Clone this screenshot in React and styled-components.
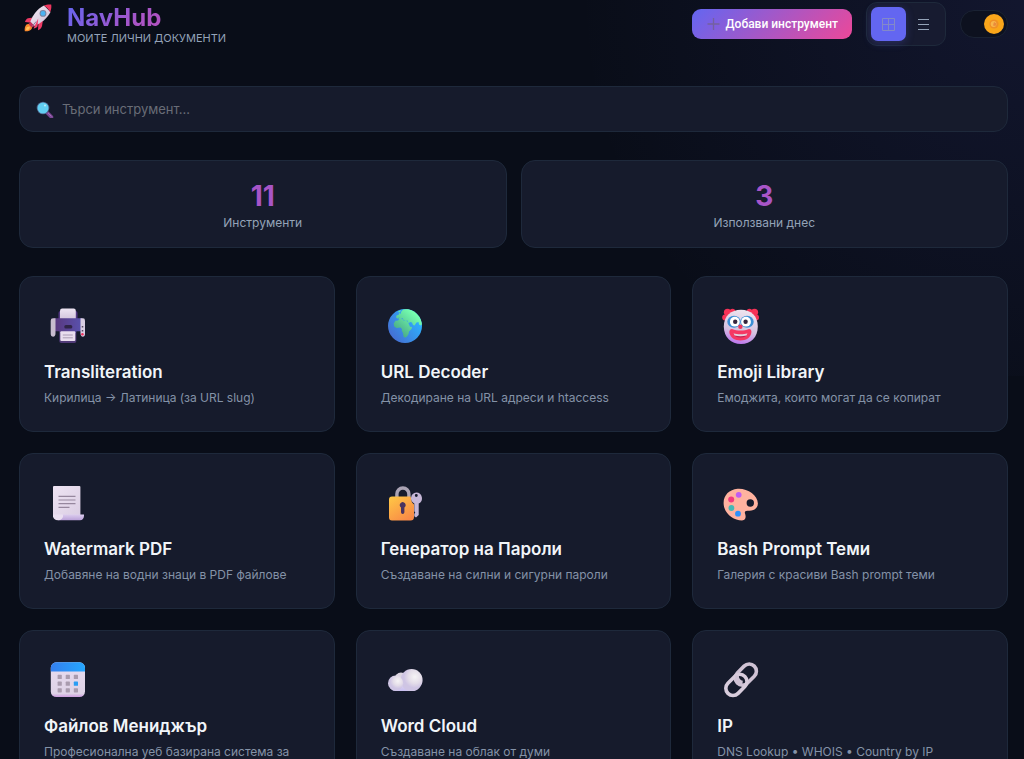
import React, { useState } from 'react';
import styled, { createGlobalStyle } from 'styled-components';

const sans = "Inter, 'Noto Sans', sans-serif";

const GlobalStyle = createGlobalStyle`
  *, *::before, *::after { box-sizing: border-box; }
  body {
    margin: 0;
    min-height: 100vh;
    color: #f1f5f9;
    font-family: ${sans};
    background:
      radial-gradient(circle 446px at 100% 0, rgba(99, 102, 241, 0.1), transparent) top right / 50% 376px no-repeat,
      #090d18;
  }
`;

const Page = styled.div`
  padding: 0 16px 24px 19px;
`;

const Header = styled.header`
  display: flex;
  justify-content: space-between;
  align-items: center;
  height: 48px;
  margin-bottom: 38px;
`;

const Logo = styled.div`
  display: flex;
  align-self: flex-start;
  gap: 10px;
`;

const LogoMark = styled.span`
  display: flex;
  align-items: center;
  justify-content: center;
  width: 38px;
  height: 36px;
`;

const LogoText = styled.div`
  padding-top: 4px;
`;

const Brand = styled.h1`
  margin: 0;
  width: max-content;
  font-size: 24px;
  line-height: 28px;
  font-weight: 700;
  color: transparent;
  background: linear-gradient(135deg, #6366f1, #a855c7 70%, #b54fbd);
  background-clip: text;
`;

const Tagline = styled.p`
  margin: 0;
  font-size: 11px;
  line-height: 12px;
  text-transform: uppercase;
  color: #94a3b8;
`;

const Actions = styled.div`
  display: flex;
  align-items: center;
  gap: 14px;
`;

const AddButton = styled.button`
  display: flex;
  align-items: center;
  gap: 6px;
  height: 30px;
  padding: 0 14px 0 15px;
  border: 0;
  border-radius: 9px;
  font: 500 12px/20px Roboto, 'Liberation Sans', sans-serif;
  color: #fff;
  background: linear-gradient(135deg, #6366f1, #ec4899);
`;

const ViewToggle = styled.div`
  display: flex;
  padding: 4px;
  border: 1px solid #1e293b;
  border-radius: 11px;
  background: #171b30;
`;

const ViewButton = styled.button`
  display: flex;
  align-items: center;
  justify-content: center;
  width: 35px;
  height: 34px;
  padding: 0;
  border: 0;
  border-radius: 7px;
  color: ${(p) => (p.$active ? '#8389c8' : '#94a3b8')};
  background: ${(p) => (p.$active ? '#6366f1' : 'transparent')};
  box-shadow: ${(p) => (p.$active ? '0 2px 8px rgba(99, 102, 241, 0.25)' : 'none')};
`;

const ThemeSwitch = styled.label`
  position: relative;
  display: flex;
  align-items: center;
  justify-content: ${(p) => (p.$on ? 'flex-end' : 'flex-start')};
  width: 48px;
  height: 28px;
  padding: 0 3px;
  border: 1px solid #1a2233;
  border-radius: 14px;
  background: #0d111f;
`;

const SwitchInput = styled.input`
  position: absolute;
  inset: 0;
  width: 100%;
  height: 100%;
  margin: 0;
  opacity: 0;
`;

const SearchBox = styled.label`
  display: flex;
  align-items: center;
  gap: 8px;
  height: 46px;
  margin-bottom: 28px;
  padding: 0 16px;
  border: 1px solid #1e293b;
  border-radius: 14px;
  background: #161b2c;
`;

const SearchInput = styled.input`
  flex: 1;
  min-width: 0;
  padding: 0;
  border: 0;
  outline: 0;
  font: 400 13px/20px ${sans};
  color: #f1f5f9;
  background: transparent;
  &::placeholder { color: #696d77; opacity: 1; }
`;

const Stats = styled.section`
  display: grid;
  grid-template-columns: 1fr 1fr;
  gap: 14px;
  margin-bottom: 28px;
`;

const StatCard = styled.div`
  padding: 18px 20px 14px;
  border: 1px solid #1e293b;
  border-radius: 14px;
  text-align: center;
  background: #161b2c;
`;

const StatValue = styled.div`
  font-size: 28px;
  line-height: 34px;
  font-weight: 700;
  color: #a855c7;
`;

const StatLabel = styled.div`
  font-size: 12px;
  line-height: 20px;
  color: #94a3b8;
`;

const ToolGrid = styled.main`
  display: grid;
  grid-template-columns: repeat(3, 1fr);
  gap: 21px;
`;

const ToolCard = styled.article`
  padding: 24px;
  border: 1px solid #1e293b;
  border-radius: 14px;
  background: #161b2c;
`;

const ToolIcon = styled.div`
  display: flex;
  align-items: center;
  justify-content: center;
  width: 48px;
  height: 50px;
  margin-bottom: 10px;
  svg { overflow: visible; }
`;

const ToolTitle = styled.h2`
  margin: 0 0 5px;
  font-size: 17px;
  line-height: 22px;
  font-weight: 600;
`;

const ToolText = styled.p`
  margin: 0;
  font-size: 12px;
  line-height: 19px;
  color: #8492a7;
`;

const Emoji = ({ size = 36, box = 36, children }) => (
  <svg width={size} height={size} viewBox={`0 0 ${box} ${box}`} aria-hidden="true">{children}</svg>
);

const Rocket = () => (
  <Emoji size={28} box={28}>
    <defs>
      <linearGradient id="rk" x1="0" y1="0" x2="1" y2="1">
        <stop offset="0" stopColor="#f7eef8" /><stop offset="1" stopColor="#c9b9d2" />
      </linearGradient>
    </defs>
    <path d="M2.5 20.5C.7 22.2.4 25 .8 27.3c2.500.3 5.400-.3 6.800-2.200l1-3-3-2.500z" fill="#f98a2c" />
    <path d="M3 23c-1 1-1 2.500-.8 3.200 1.300 0 2.500-.4 3.200-1.400l.5-2.300z" fill="#ffc35a" />
    <path d="M9.500 13.500 4 14.200c-1.600.6-2.600 2-3 3.800l6.500.8z" fill="#ee3a65" />
    <path d="M14.500 18.500l-.5 7.700c2.300-.9 3.600-2.400 4-4.200l1-6z" fill="#ee3a65" />
    <path d="M20 1.600C13.800 4.500 9 10.500 6.200 18l4 4C17.500 19 23.600 14 26.500 8z" fill="url(#rk)" />
    <path d="M19.700 1.700C22.300.5 25.300.2 27.200.6c.4 2 .2 5-1.100 7.600-1.500-3.100-3.500-5.300-6.400-6.500z" fill="#ed365f" />
    <path d="M6.300 17.500 4.800 20.400l3 3 2.800-1.500z" fill="#c42f5b" />
    <path d="M14.200 14.500 9.500 24.500c2-.2 3-.8 4-2z" fill="#f0426c" />
    <path d="M8.200 22.300l4-4.800" stroke="#8f7c9d" strokeWidth="1" />
    <circle cx="19" cy="9.400" r="3.400" fill="#78829f" />
    <circle cx="19" cy="9.400" r="2.400" fill="#4ab2f2" />
  </Emoji>
);

const Magnifier = () => (
  <Emoji size={18} box={18}>
    <path d="M11.500 13l4 4" stroke="#7c4896" strokeWidth="3.600" strokeLinecap="round" />
    <path d="M12.200 13.200l3 3" stroke="#a36bb5" strokeWidth="1" strokeLinecap="round" />
    <circle cx="7" cy="8" r="6.300" fill="#4d6087" />
    <circle cx="7" cy="8" r="5.500" fill="#62cff2" />
    <circle cx="9" cy="5.500" r="1.100" fill="#b5edfb" />
  </Emoji>
);

const Coin = () => (
  <Emoji size={20} box={20}>
    <circle cx="10" cy="10" r="10" fill="#faa61a" />
    <circle cx="10" cy="10" r="4.600" fill="#f08f26" />
    <circle cx="9.600" cy="10" r="2.900" fill="#f8b64b" />
    <path d="M10 8l2.500 1.500-1 2.500-2.500-.5z" fill="#e98b3d" />
  </Emoji>
);

const Printer = () => (
  <Emoji>
    <defs>
      <linearGradient id="pr"><stop offset="0" stopColor="#59377d" /><stop offset="1" stopColor="#5952ae" /></linearGradient>
      <linearGradient id="pp" x1="0" y1="0" x2="0" y2="1"><stop offset="0" stopColor="#eee5f3" /><stop offset="1" stopColor="#cfc1da" /></linearGradient>
    </defs>
    <path d="M8.500 11V5q0-2 2-2h15q2 0 2 2v6z" fill="#513681" />
    <rect x="9.300" y="22" width="17" height="13" rx="2" fill="#513b78" />
    <rect x="10" y=".5" width="15.800" height="12" rx="2.200" fill="url(#pp)" />
    <path d="M4 10.300h28v13H27q-1 0-1 1v1H10v-1q0-1-1-1H4z" fill="url(#pr)" />
    <path d="M3 10.300h2.500v15q0 3.400-2.500 3.400-2.300 0-2.300-2.400V12.700q0-2.400 2.300-2.400z" fill="#c8bccf" />
    <path d="M30.500 10.300H33q2 0 2 2.400v13.600q0 2.400-2 2.400-2.500 0-2.500-3.400z" fill="#d8cde2" />
    <rect x="14.300" y="17" width="8" height="3.600" rx="1.600" fill="#302548" />
    <rect x="10.300" y="23.300" width="15" height="9.600" rx="1" fill="#e9ddee" />
    <path d="M12.800 27h10M12.800 29.800h10" stroke="#9b8ca6" strokeWidth=".8" />
    <path d="M32.500 18v1.500M32.500 22v1.500" stroke="#544962" strokeWidth="1.500" />
    <circle cx="32.400" cy="26.300" r="1.300" fill="#f0345f" />
  </Emoji>
);

const Globe = () => (
  <Emoji>
    <defs>
      <linearGradient id="sea" x1=".9" y1=".3" x2=".1" y2=".9"><stop offset="0" stopColor="#2cb2ff" /><stop offset="1" stopColor="#466bd0" /></linearGradient>
      <linearGradient id="land" gradientUnits="userSpaceOnUse" x1="28" y1="6" x2="10" y2="26"><stop offset="0" stopColor="#76ffb0" /><stop offset="1" stopColor="#46a684" /></linearGradient>
      <clipPath id="gl"><circle cx="18" cy="18" r="17" /></clipPath>
    </defs>
    <circle cx="18" cy="18" r="17" fill="url(#sea)" />
    <g clipPath="url(#gl)" fill="url(#land)">
      <path d="M14 4l2-2.500L20 1h5l6 4 3 5 1.500 6-2 1.500-1.500-1-.5-2.500-2 .5-2 3-1.500-.5-1-2.500-2-.5-1.500 1.500-1-3-2 .5-2-1-1-2-1.500 1-.5 1-2-.5.5-2 2-1z" />
      <path d="M8.500 12.800l2.500-.3 1.500-1.200 3-.3 1 1.500 2.500.3 1.500.7 1.500 3 1 2.300 2 .2-.5 2-2.500 2.500-.5 2.500-1.500 2.500-2 1.200-1.500-1.200-.5-3.500-1.200-2 .2-2-1.500-1.500-4 .5-2.300-1.500-.5-3z" />
      <path d="M9 9.500l.5-2L12 6.500l.5-2L14 6l1.500 1.500L14 9l-2 .3-1 1.400z" />
      <path d="M11 3.500l3-1.300-.8 1.500-1.500.8z" />
    </g>
  </Emoji>
);

const Clown = () => (
  <Emoji>
    <defs>
      <linearGradient id="cf" x1=".6" y1="0" x2=".4" y2="1"><stop offset="0" stopColor="#eee5ef" /><stop offset=".6" stopColor="#d5c3e0" /><stop offset="1" stopColor="#bd75ed" /></linearGradient>
    </defs>
    <g fill="#f63257">
      <circle cx="4.500" cy="4.300" r="3.600" /><circle cx="9.500" cy="3.500" r="2.800" /><circle cx="2.200" cy="9.500" r="3" />
      <circle cx="31.500" cy="4.300" r="3.600" /><circle cx="26.500" cy="3.500" r="2.800" /><circle cx="33" cy="9.500" r="3" />
    </g>
    <path d="M18 1.800C28 1.800 34.800 8 34.800 18.500S28 36 18 36 .8 29 .8 18.500 8 1.800 18 1.800z" fill="url(#cf)" />
    <ellipse cx="11" cy="13.700" rx="6.700" ry="6" fill="#3c8fd5" />
    <ellipse cx="24" cy="13.700" rx="6.700" ry="6" fill="#3c8fd5" />
    <circle cx="11.800" cy="13.700" r="4.900" fill="#fff" /><circle cx="23" cy="13.700" r="4.900" fill="#fff" />
    <circle cx="12.200" cy="13.700" r="2.200" fill="#35263f" /><circle cx="22.600" cy="13.700" r="2.200" fill="#35263f" />
    <path d="M9 21c3 1.300 5 1.600 8.500 1.600S23 22.300 26 21c2 0 3 2 2.200 4.500C27 30 23 32.400 17.500 32.400S8 30 6.500 25.500C5.800 23 7 21 9 21z" fill="#f63763" />
    <path d="M10.500 25.500c4 1.500 10 1.500 14 0-.5 2.500-3 4-7 4s-6.500-1.500-7-4z" fill="#bc2455" />
    <path d="M10.500 25.200c4 1.500 10 1.500 14 0l-1 2.200c-4 1.100-8 1.100-12 0z" fill="#e6cfdc" />
    <circle cx="17.400" cy="18.800" r="2.200" fill="#ef365d" />
  </Emoji>
);

const Scroll = () => (
  <Emoji>
    <defs>
      <linearGradient id="sc" x1="0" y1="0" x2="1" y2="1"><stop offset="0" stopColor="#eee4f3" /><stop offset="1" stopColor="#dacde3" /></linearGradient>
      <linearGradient id="sr" x1="0" y1="0" x2="0" y2="1"><stop offset="0" stopColor="#dccdee" /><stop offset="1" stopColor="#b9a0d8" /></linearGradient>
    </defs>
    <path d="M4 1h25.500q.9 0 .9.900V32H3V2q0-1 1-1z" fill="url(#sc)" />
    <path d="M12 29.500h22v1.300c0 2.700-1.500 4.500-4 4.500H8c2.500-1 3.500-3 4-5.800z" fill="url(#sr)" />
    <path d="M3 29.500h10v1.800c0 2.300-2 4-5 4s-5-1.700-5-4.500z" fill="#eadff1" />
    <path d="M8.500 11.300h17M8.500 15h17M8.500 18.700h17M8.500 22.400h11" stroke="#96879e" strokeWidth="1.200" />
  </Emoji>
);

const Lock = () => (
  <Emoji>
    <defs>
      <linearGradient id="lk" x1="0" y1="0" x2=".7" y2="1"><stop offset="0" stopColor="#ffc945" /><stop offset="1" stopColor="#f98a47" /></linearGradient>
    </defs>
    <path d="M9.900 14V9a6 6 0 0 1 12 0v5" fill="none" stroke="#aaa3b4" strokeWidth="3.400" />
    <path d="M5 11.500h18.500l1.500 6 2 2v12.500q0 3.500-3.500 3.500H5q-3 0-3-3v-18q0-3 3-3z" fill="url(#lk)" />
    <path d="M12.700 20.300a3 3 0 1 1 4.700 2.300v4.600a1.600 1.600 0 0 1-3.400 0v-4.600a3 3 0 0 1-1.300-2.300z" fill="#493360" />
    <path fillRule="evenodd" d="M29.300 7.500a5.800 5.800 0 0 1 2.400 11V30L29 32.600l-1.700-1.300v-2.500l1-1-1-1.500v-7.800a5.800 5.800 0 0 1 2-11zM29.300 9a1.400 1.400 0 1 0 0 2.900 1.400 1.400 0 0 0 0-2.900z" fill="#c6b7d7" />
  </Emoji>
);

const Palette = () => (
  <Emoji>
    <path fillRule="evenodd" d="M14.500 3.800C24 3 34.700 10 34.900 18.500c0 4.800-4 7.200-8.400 7.200-3.500 0-5.300.3-4.500 2.700 1 2.600 1.300 7-3 7.100C10 35.500.6 28 .6 18 .6 10 6.500 4.500 14.500 3.800zM27.300 14.300a3.700 3.700 0 1 0 0 7.400 3.700 3.700 0 0 0 0-7.400z" fill="#ffb29f" />
    <circle cx="15.700" cy="9.800" r="2.900" fill="#c15cf2" />
    <circle cx="8.200" cy="14.500" r="3" fill="#f43a7d" />
    <circle cx="8.400" cy="23" r="2.900" fill="#43b8b5" />
    <circle cx="15" cy="28.700" r="2.900" fill="#2e91fb" />
  </Emoji>
);

const Calendar = () => (
  <Emoji>
    <defs>
      <linearGradient id="ch"><stop offset="0" stopColor="#347fed" /><stop offset="1" stopColor="#25a7ff" /></linearGradient>
      <linearGradient id="cb" x1="0" y1="0" x2="0" y2="1"><stop offset="0" stopColor="#e8dcf0" /><stop offset=".9" stopColor="#ded2e6" /><stop offset="1" stopColor="#cd9cdf" /></linearGradient>
    </defs>
    <rect x=".8" y=".3" width="34.200" height="34.700" rx="5.500" fill="url(#cb)" />
    <path d="M.8 9.500V6A5.500 5.500 0 0 1 6.300.3h23.200A5.500 5.500 0 0 1 35 6v3.500z" fill="url(#ch)" />
    {[12.8, 19.6, 26.2].map((y, row) => [7.6, 15.7, 23.8].map((x, col) => (
      <rect key={`${x}-${y}`} x={x} y={y} width="4.200" height="4.200" rx=".6" fill={row === 1 && col === 2 ? '#2a9df4' : '#a99bae'} />
    )))}
  </Emoji>
);

const Cloud = () => (
  <Emoji>
    <defs>
      <linearGradient id="c0" x1="0" y1="0" x2="0" y2="1"><stop offset="0" stopColor="#e8e2ee" /><stop offset="1" stopColor="#c9bff0" /></linearGradient>
      <radialGradient id="c1" cx=".65" cy=".35"><stop offset="0" stopColor="#f6f4f6" /><stop offset=".6" stopColor="#e4dde9" /><stop offset="1" stopColor="#cfc5e4" /></radialGradient>
    </defs>
    <circle cx="14" cy="17" r="6.500" fill="#ddd6e2" />
    <rect x="3" y="18" width="28" height="11" rx="5.500" fill="url(#c0)" />
    <circle cx="24.600" cy="18.100" r="11" fill="url(#c1)" />
    <circle cx="8.600" cy="21.200" r="7.600" fill="url(#c1)" />
  </Emoji>
);

const Link = () => (
  <Emoji>
    <g fill="none" strokeWidth="3.600">
      <rect x="-12" y="-7.200" width="24" height="14.400" rx="7.200" transform="translate(22.800 12.600) rotate(-45)" stroke="#cfc2d4" />
      <rect x="-12" y="-7.200" width="24" height="14.400" rx="7.200" transform="translate(13.400 22.900) rotate(-45)" stroke="#d8ccdc" />
      <path d="M19.600 20.600a6.400 6.400 0 0 1-5.500-7" stroke="#cfc2d4" />
    </g>
  </Emoji>
);

const tools = [
  { icon: Printer, title: 'Transliteration', text: 'Кирилица → Латиница (за URL slug)' },
  { icon: Globe, title: 'URL Decoder', text: 'Декодиране на URL адреси и htaccess' },
  { icon: Clown, title: 'Emoji Library', text: 'Емоджита, които могат да се копират' },
  { icon: Scroll, title: 'Watermark PDF', text: 'Добавяне на водни знаци в PDF файлове' },
  { icon: Lock, title: 'Генератор на Пароли', text: 'Създаване на силни и сигурни пароли' },
  { icon: Palette, title: 'Bash Prompt Теми', text: 'Галерия с красиви Bash prompt теми' },
  { icon: Calendar, title: 'Файлов Мениджър', text: 'Професионална уеб базирана система за' },
  { icon: Cloud, title: 'Word Cloud', text: 'Създаване на облак от думи' },
  { icon: Link, title: 'IP', text: 'DNS Lookup • WHOIS • Country by IP' },
];

export default function App() {
  const [view, setView] = useState('grid');
  const [dark, setDark] = useState(true);
  return (
    <>
      <GlobalStyle />
      <Page>
        <Header>
          <Logo>
            <LogoMark><Rocket /></LogoMark>
            <LogoText>
              <Brand>NavHub</Brand>
              <Tagline>Моите лични документи</Tagline>
            </LogoText>
          </Logo>
          <Actions>
            <AddButton type="button">
              <svg width="13" height="12" viewBox="0 0 13 12" aria-hidden="true">
                <path d="M6.500 0v12M0.500 6h12" stroke="#74609f" strokeWidth="1.300" />
              </svg>
              Добави инструмент
            </AddButton>
            <ViewToggle>
              <ViewButton type="button" aria-label="Grid" $active={view === 'grid'} onClick={() => setView('grid')}>
                <svg width="13" height="13" viewBox="0 0 13 13" fill="none" stroke="currentColor" aria-hidden="true">
                  <path d="M.5.5h12v12H.5zM6.500.5v12M.5 6.500h12" />
                </svg>
              </ViewButton>
              <ViewButton type="button" aria-label="List" $active={view === 'list'} onClick={() => setView('list')}>
                <svg width="11" height="12" viewBox="0 0 11 12" stroke="currentColor" aria-hidden="true">
                  <path d="M0 1.500h11M0 6.500h11M0 11.500h11" />
                </svg>
              </ViewButton>
            </ViewToggle>
            <ThemeSwitch $on={dark}>
              <SwitchInput type="checkbox" role="switch" aria-label="Theme" checked={dark} onChange={(e) => setDark(e.target.checked)} />
              <Coin />
            </ThemeSwitch>
          </Actions>
        </Header>

        <SearchBox>
          <Magnifier />
          <SearchInput type="text" placeholder="Търси инструмент..." />
        </SearchBox>

        <Stats>
          <StatCard>
            <StatValue>11</StatValue>
            <StatLabel>Инструменти</StatLabel>
          </StatCard>
          <StatCard>
            <StatValue>3</StatValue>
            <StatLabel>Използвани днес</StatLabel>
          </StatCard>
        </Stats>

        <ToolGrid>
          {tools.map(({ icon: Icon, title, text }) => (
            <ToolCard key={title}>
              <ToolIcon><Icon /></ToolIcon>
              <ToolTitle>{title}</ToolTitle>
              <ToolText>{text}</ToolText>
            </ToolCard>
          ))}
        </ToolGrid>
      </Page>
    </>
  );
}
